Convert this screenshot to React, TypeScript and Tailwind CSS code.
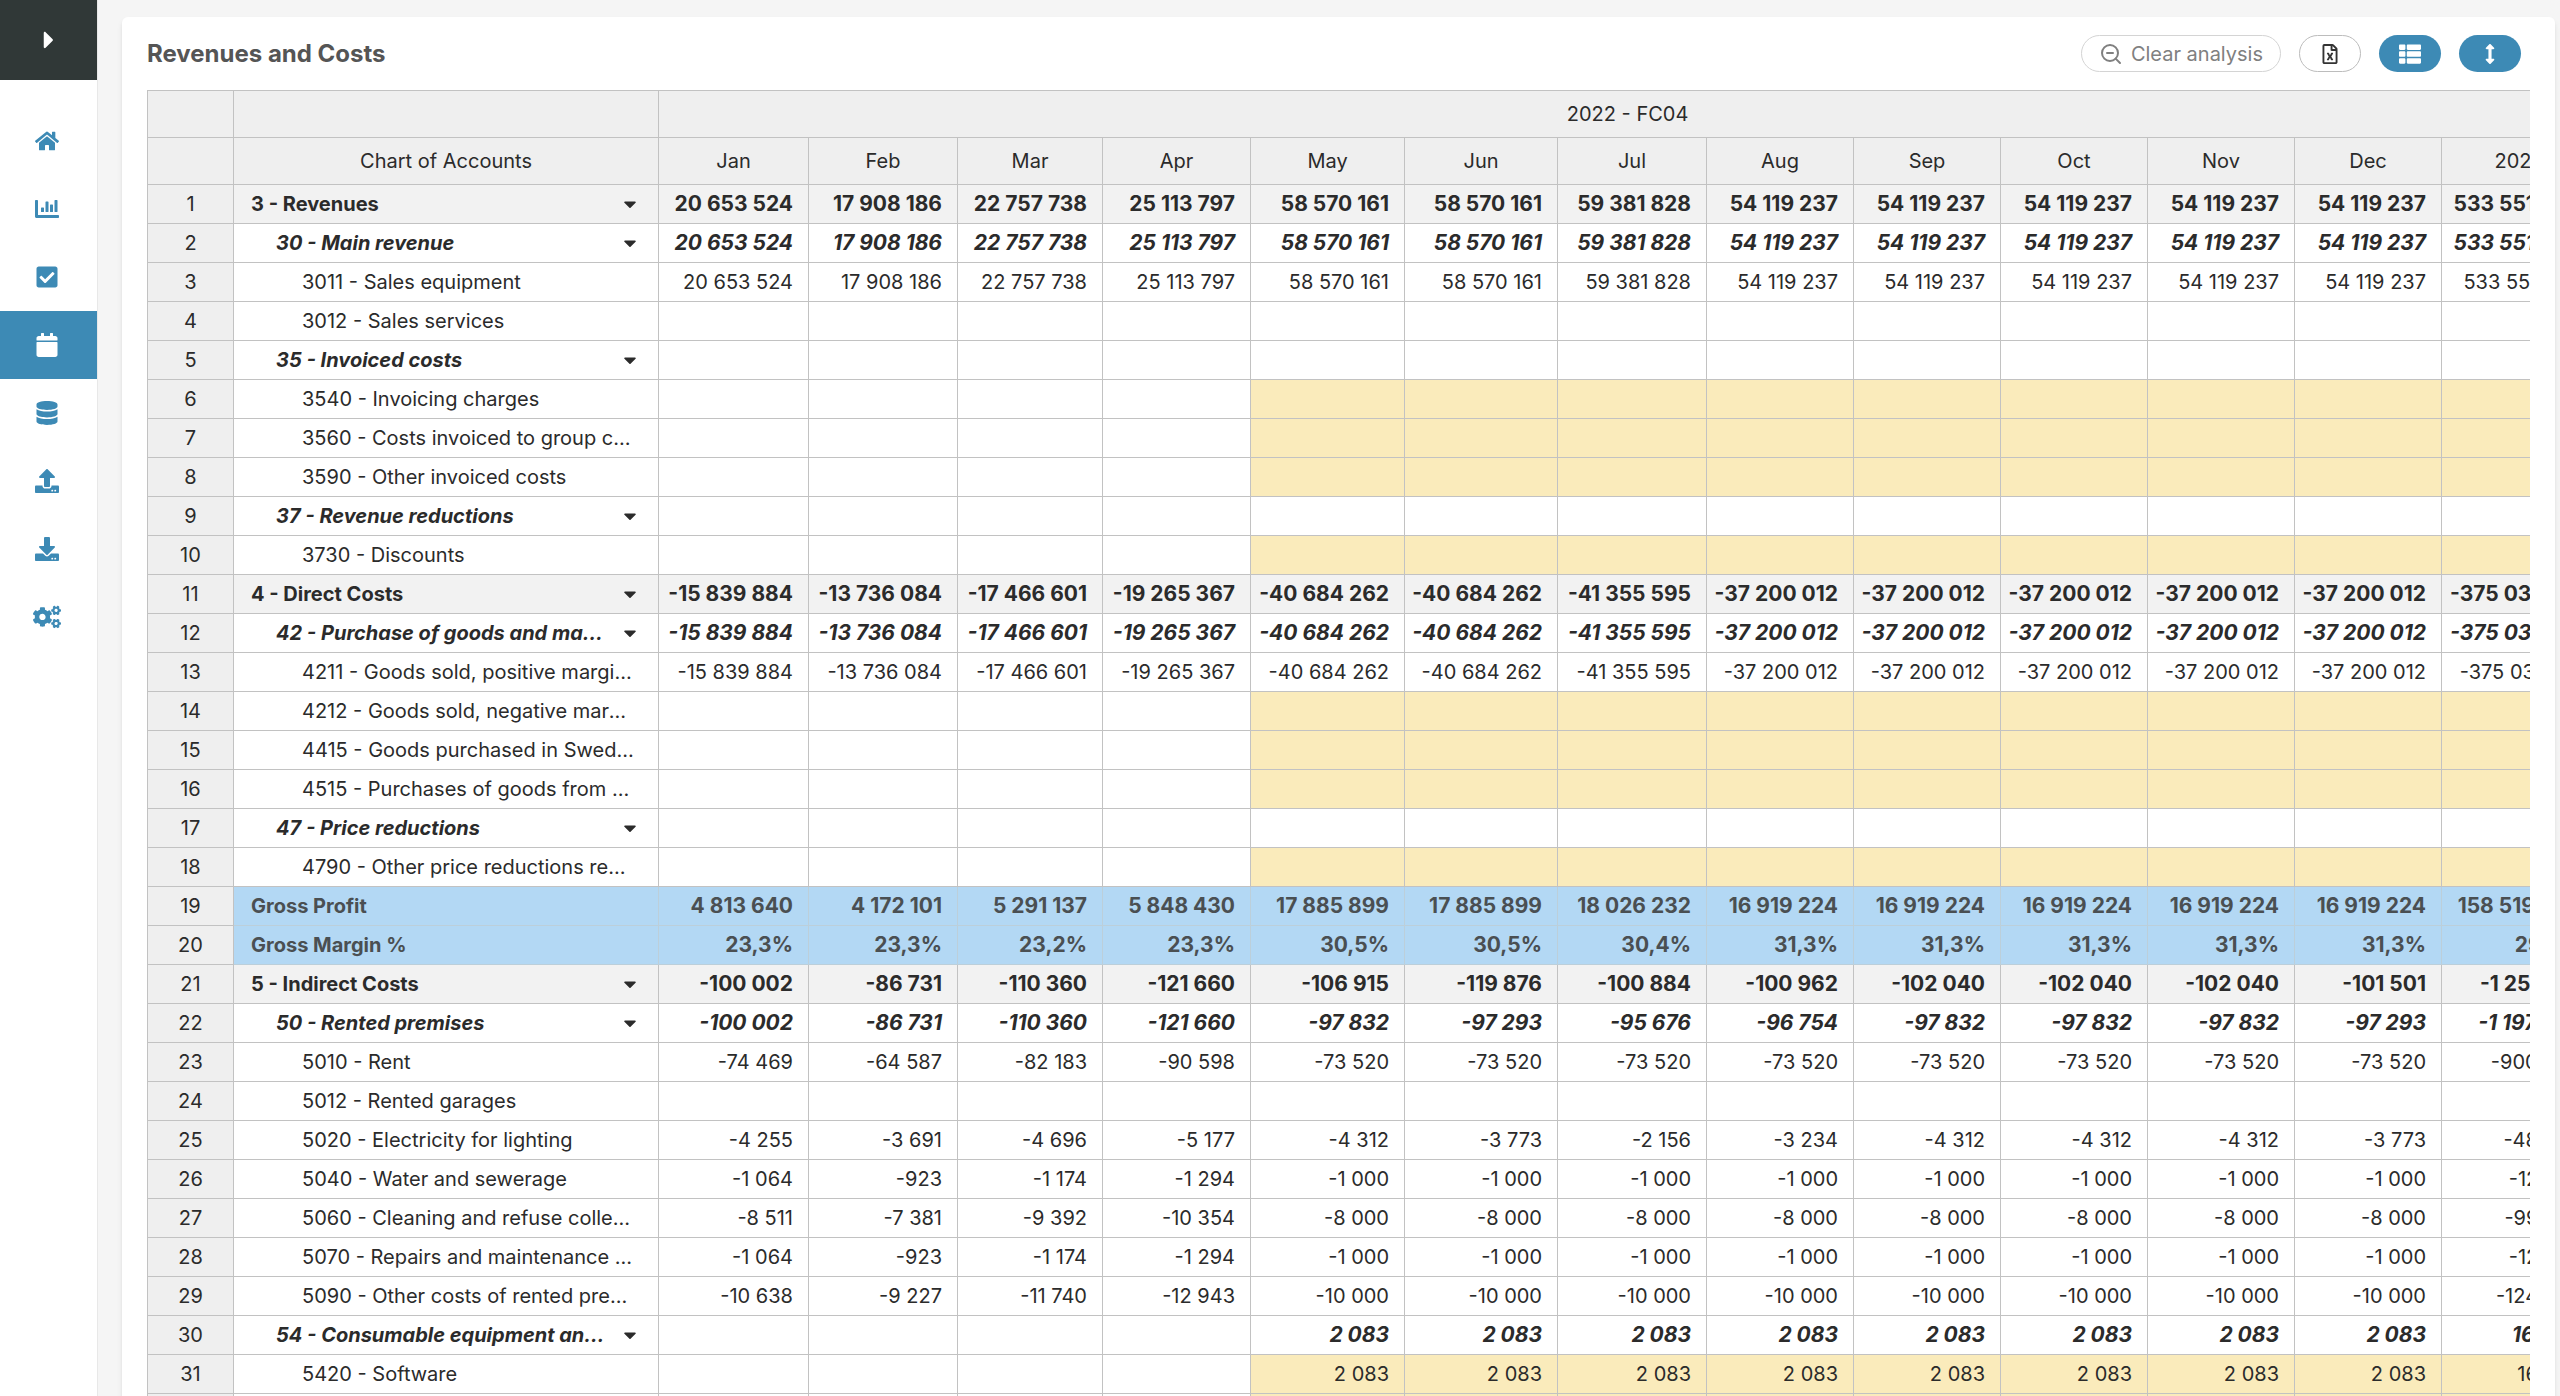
import {
  FaArrowsAltV,
  FaCalendar,
  FaCaretDown,
  FaCaretRight,
  FaChartBar,
  FaCheckSquare,
  FaCogs,
  FaDatabase,
  FaDownload,
  FaHome,
  FaRegFileExcel,
  FaThList,
  FaUpload,
} from "react-icons/fa";
import { ZoomOut } from "lucide-react";
import clsx from "clsx";

type Kind = "account" | "group" | "detail" | "result";

type Row = {
  kind: Kind;
  label: string;
  values?: number[];
  percent?: boolean;
  total?: number;
  editable?: boolean;
};

const MONTHS = ["Jan", "Feb", "Mar", "Apr", "May", "Jun", "Jul", "Aug", "Sep", "Oct", "Nov", "Dec"];
const FIRST_FORECAST = 4;

const revenue = [
  20653524, 17908186, 22757738, 25113797, 58570161, 58570161, 59381828, 54119237, 54119237, 54119237, 54119237, 54119237,
];
const direct = [
  -15839884, -13736084, -17466601, -19265367, -40684262, -40684262, -41355595, -37200012, -37200012, -37200012,
  -37200012, -37200012,
];
const flat = (actuals: number[], forecast: number) => [...actuals, ...Array(8).fill(forecast)];

const ROWS: Row[] = [
  { kind: "account", label: "3 - Revenues", values: revenue },
  { kind: "group", label: "30 - Main revenue", values: revenue },
  { kind: "detail", label: "3011 - Sales equipment", values: revenue },
  { kind: "detail", label: "3012 - Sales services" },
  { kind: "group", label: "35 - Invoiced costs" },
  { kind: "detail", label: "3540 - Invoicing charges", editable: true },
  { kind: "detail", label: "3560 - Costs invoiced to group companies", editable: true },
  { kind: "detail", label: "3590 - Other invoiced costs", editable: true },
  { kind: "group", label: "37 - Revenue reductions" },
  { kind: "detail", label: "3730 - Discounts", editable: true },
  { kind: "account", label: "4 - Direct Costs", values: direct },
  { kind: "group", label: "42 - Purchase of goods and materials", values: direct },
  { kind: "detail", label: "4211 - Goods sold, positive margin VAT", values: direct },
  { kind: "detail", label: "4212 - Goods sold, negative margin VAT", editable: true },
  { kind: "detail", label: "4415 - Goods purchased in Sweden", editable: true },
  { kind: "detail", label: "4515 - Purchases of goods from other countries", editable: true },
  { kind: "group", label: "47 - Price reductions" },
  { kind: "detail", label: "4790 - Other price reductions received", editable: true },
  {
    kind: "result",
    label: "Gross Profit",
    values: [
      4813640, 4172101, 5291137, 5848430, 17885899, 17885899, 18026232, 16919224, 16919224, 16919224, 16919224, 16919224,
    ],
  },
  {
    kind: "result",
    label: "Gross Margin %",
    values: [23.3, 23.3, 23.2, 23.3, 30.5, 30.5, 30.4, 31.3, 31.3, 31.3, 31.3, 31.3],
    percent: true,
    total: 29.7,
  },
  {
    kind: "account",
    label: "5 - Indirect Costs",
    values: [-100002, -86731, -110360, -121660, -106915, -119876, -100884, -100962, -102040, -102040, -102040, -101501],
  },
  {
    kind: "group",
    label: "50 - Rented premises",
    values: [-100002, -86731, -110360, -121660, -97832, -97293, -95676, -96754, -97832, -97832, -97832, -97293],
  },
  { kind: "detail", label: "5010 - Rent", values: flat([-74469, -64587, -82183, -90598], -73520), total: -900000 },
  { kind: "detail", label: "5012 - Rented garages" },
  {
    kind: "detail",
    label: "5020 - Electricity for lighting",
    values: [-4255, -3691, -4696, -5177, -4312, -3773, -2156, -3234, -4312, -4312, -4312, -3773],
  },
  { kind: "detail", label: "5040 - Water and sewerage", values: flat([-1064, -923, -1174, -1294], -1000) },
  { kind: "detail", label: "5060 - Cleaning and refuse collection", values: flat([-8511, -7381, -9392, -10354], -8000) },
  { kind: "detail", label: "5070 - Repairs and maintenance of premises", values: flat([-1064, -923, -1174, -1294], -1000) },
  { kind: "detail", label: "5090 - Other costs of rented premises", values: flat([-10638, -9227, -11740, -12943], -10000) },
  { kind: "group", label: "54 - Consumable equipment and supplies", values: flat([0, 0, 0, 0], 2083) },
  { kind: "detail", label: "5420 - Software", values: flat([0, 0, 0, 0], 2083), editable: true },
  { kind: "detail", label: "5460 - Consumables", editable: true },
];

const NAV = [
  { label: "Home", icon: FaHome },
  { label: "Reports", icon: FaChartBar },
  { label: "Tasks", icon: FaCheckSquare },
  { label: "Planning", icon: FaCalendar, active: true },
  { label: "Data", icon: FaDatabase },
  { label: "Upload", icon: FaUpload },
  { label: "Download", icon: FaDownload },
  { label: "Settings", icon: FaCogs, large: true },
];

function formatValue(value: number, percent?: boolean) {
  if (percent) return `${value.toFixed(1).replace(".", ",")}%`;
  if (value === 0) return "";
  return String(value).replace(/\B(?=(\d{3})+(?!\d))/g, " ");
}

function Sidebar() {
  return (
    <aside className="w-[98px] shrink-0 border-r border-[#e8e8e8] bg-white">
      <button type="button" aria-label="Expand menu" className="flex h-20 w-full items-center justify-center bg-[#303837] text-white">
        <FaCaretRight className="h-7 w-auto" />
      </button>
      <nav className="mt-[27px]">
        {NAV.map(({ label, icon: Icon, active, large }) => (
          <a
            key={label}
            href="#"
            aria-label={label}
            className={clsx(
              "flex h-[68px] items-center justify-center pr-1",
              active ? "bg-[#3d8ab5] text-white" : "text-[#3d8ab5]"
            )}
          >
            <Icon className={large ? "h-7 w-auto" : "h-6 w-auto"} />
          </a>
        ))}
      </nav>
    </aside>
  );
}

function Toolbar() {
  return (
    <div className="flex items-center gap-[18px]">
      <button type="button" className="flex h-[37px] items-center gap-2 rounded-full border border-[#d4d4d4] px-[17px] text-xl leading-none text-[#808080]">
        <ZoomOut className="h-6 w-6" />
        Clear analysis
      </button>
      <button type="button" aria-label="Export to Excel" className="flex h-[37px] w-[62px] items-center justify-center rounded-full border border-[#bcbcbc] text-[#333]">
        <FaRegFileExcel className="h-5 w-5" />
      </button>
      <button type="button" aria-label="List view" className="flex h-[37px] w-[62px] items-center justify-center rounded-full bg-[#3d8ab5] text-white">
        <FaThList className="h-[22px] w-[22px]" />
      </button>
      <button type="button" aria-label="Row height" className="flex h-[37px] w-[62px] items-center justify-center rounded-full bg-[#3d8ab5] text-white">
        <FaArrowsAltV className="h-5 w-5" />
      </button>
    </div>
  );
}

function GridRow({ row, number }: { row: Row; number: number }) {
  const { kind, label, values, percent, editable } = row;
  const expandable = kind === "account" || kind === "group";
  const total = row.total ?? (values ?? []).reduce((sum, value) => sum + value, 0);
  const cells = [...MONTHS.map((_, index) => values?.[index] ?? 0), total];
  const border = kind === "result" ? "border border-[#bccfda]" : "border border-[#c2c2c2]";

  return (
    <tr
      className={clsx(
        "h-[39px]",
        kind === "account" && "bg-[#f2f2f2] font-bold",
        kind === "group" && "font-bold italic",
        kind === "result" && "bg-[#b3d8f4] font-bold text-[#4a4f52]"
      )}
    >
      <th scope="row" className="border border-[#c2c2c2] bg-[#efefef] text-center font-normal not-italic text-[#2b2b2b]">
        {number}
      </th>
      <td
        className={clsx(
          border,
          kind === "group" && "pr-[18px] pl-[42px]",
          kind === "detail" && "pr-6 pl-[68px]",
          (kind === "account" || kind === "result") && "pr-[18px] pl-[17px]"
        )}
      >
        <div className="flex items-center">
          <span className="min-w-0 flex-1 truncate">{label}</span>
          {expandable && (
            <button type="button" aria-label="Collapse" className="ml-3 flex w-5 justify-end">
              <FaCaretDown className="h-5 w-auto" />
            </button>
          )}
        </div>
      </td>
      {cells.map((value, index) => (
        <td
          key={index}
          className={clsx(
            border,
            "pr-[15px] text-right whitespace-nowrap",
            kind !== "detail" && "text-[21px]",
            editable && index >= FIRST_FORECAST && "bg-[#faebbb]"
          )}
        >
          {formatValue(value, percent)}
        </td>
      ))}
    </tr>
  );
}

function BudgetGrid() {
  return (
    <div className="overflow-hidden">
      <table className="w-[2449px] table-fixed border-collapse text-xl leading-[30px] text-[#2b2b2b]">
        <colgroup>
          <col className="w-[86px]" />
          <col className="w-[425px]" />
          <col className="w-[150px]" />
          <col className="w-[149px]" />
          <col className="w-[145px]" />
          <col className="w-[148px]" />
          <col className="w-[154px]" />
          <col className="w-[153px]" />
          <col className="w-[149px]" />
          <col span={5} className="w-[147px]" />
          <col className="w-[155px]" />
        </colgroup>
        <thead className="bg-[#efefef]">
          <tr className="h-[47px]">
            <th className="border border-[#c2c2c2]" />
            <th className="border border-[#c2c2c2]" />
            <th colSpan={13} className="border border-[#c2c2c2] font-normal">
              2022 - FC04
            </th>
          </tr>
          <tr className="h-[47px]">
            <th className="border border-[#c2c2c2]" />
            <th className="border border-[#c2c2c2] font-normal">Chart of Accounts</th>
            {MONTHS.map((month) => (
              <th key={month} className="border border-[#c2c2c2] font-normal">
                {month}
              </th>
            ))}
            <th className="border border-[#c2c2c2] font-normal">2022</th>
          </tr>
        </thead>
        <tbody>
          {ROWS.map((row, index) => (
            <GridRow key={row.label} row={row} number={index + 1} />
          ))}
        </tbody>
      </table>
    </div>
  );
}

export default function App() {
  return (
    <div className="flex h-screen overflow-hidden bg-[#f5f5f5] font-['Inter',sans-serif]">
      <Sidebar />
      <main className="min-w-0 flex-1 pt-[17px] pr-[5px] pl-6">
        <section className="rounded-md bg-white pr-[25px] pl-[25px] shadow-md">
          <header className="flex h-[73px] items-center justify-between pr-[9px]">
            <h1 className="text-2xl font-bold text-[#555]">Revenues and Costs</h1>
            <Toolbar />
          </header>
          <BudgetGrid />
        </section>
      </main>
    </div>
  );
}
